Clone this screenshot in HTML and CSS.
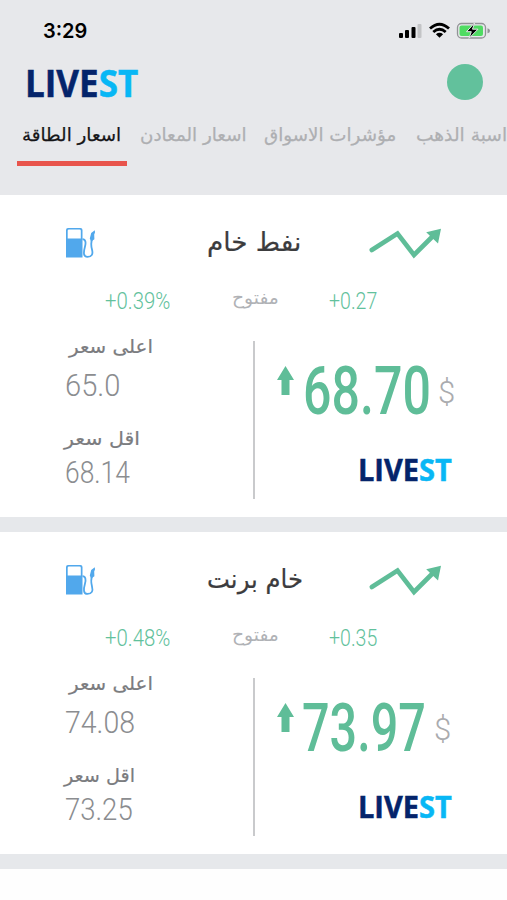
FILE: index.html
```html
<!DOCTYPE html>
<html lang="ar">
<head>
<meta charset="utf-8">
<meta name="viewport" content="width=device-width">
<title>LIVEST</title>
<link rel="stylesheet" href="styles.css">
</head>
<body>
<svg class="defs" width="0" height="0" aria-hidden="true">
  <symbol id="pump" viewBox="0 0 30 30">
    <path fill="#51a8ec" fill-rule="evenodd" d="M2 0H14.500Q16.500 0 16.500 2V29.500H0V2Q0 0 2 0ZM3 1.500Q1.700 1.500 1.700 2.800V10.600H14.800V2.800Q14.800 1.500 13.500 1.500Z"/>
    <path fill="none" stroke="#51a8ec" stroke-width="1.800" d="M16.500 11.200C19.800 11.200 20 15 19 18.500C17.500 24 17 28.900 21.500 28.900C26 28.900 27.200 26 26 21.500C25 17.500 24.500 14.500 26.300 10.800"/>
    <path fill="#51a8ec" d="M28.800 2.200L25.200 5L23.800 10.500L25 13.500L28.400 11.200L28.200 6.500L29 4.500Z"/>
  </symbol>
  <symbol id="trend" viewBox="0 0 74 32">
    <path fill="none" stroke="#5fbd98" stroke-width="4.600" stroke-linecap="round" stroke-linejoin="miter" d="M3.800 22L29.500 5.500L46 27L65 8"/>
    <path fill="#5fbd98" d="M73 .8L58.200 4.200L70 15.500Z"/>
  </symbol>
  <symbol id="up" viewBox="0 0 18 30">
    <path fill="#5fbd98" d="M8.500 0L17 14H12.500V29H4.500V14H0Z"/>
  </symbol>
</svg>

<header class="header">
  <div class="status">
    <span class="time">3:29</span>
    <svg class="status-icons" width="94" height="20" viewBox="0 0 94 20">
      <rect x="1" y="12" width="4" height="5" rx="1"/>
      <rect x="7" y="9" width="4" height="8" rx="1"/>
      <rect x="13.500" y="6" width="4" height="11" rx="1"/>
      <rect x="19.500" y="3" width="4" height="14" rx="1" fill="#c3c4c6"/>
      <g fill="none" stroke="#000" stroke-width="2.800">
        <path d="M32 7.500Q41.500 -1 51 7.500"/>
        <path d="M35.300 11Q41.500 5.500 47.700 11"/>
      </g>
      <path d="M37.900 13.200Q41.500 10.500 45.100 13.200L41.500 16.800Z"/>
      <rect x="59.500" y="2.500" width="28" height="14.500" rx="4" fill="none" stroke="#929396" stroke-width="1.300"/>
      <rect x="61.500" y="4.500" width="23.500" height="10.500" rx="2" fill="#4fdb62"/>
      <path fill="#929396" d="M89.500 7.200Q92 7.700 92 9.700T89.500 12.200Z"/>
      <path stroke="#e7e8eb" stroke-width="1" d="M76.500 2L68.500 10.700H73.300L71 17.300L80 8.200H74.500Z"/>
    </svg>
  </div>
  <div class="brand-row">
    <div class="logo logo-lg"><span class="fit">LIVE<b>ST</b></span></div>
    <div class="avatar"></div>
  </div>
  <nav class="tabs">
    <a class="tab tab1 active"><span class="fit">اسعار الطاقة</span></a>
    <a class="tab tab2"><span class="fit">اسعار المعادن</span></a>
    <a class="tab tab3"><span class="fit">مؤشرات الاسواق</span></a>
    <a class="tab tab4"><span class="fit">اسبة الذهب</span></a>
  </nav>
</header>

<main>
  <section class="card">
    <div class="card-head">
      <svg class="pump" width="30" height="30"><use href="#pump"/></svg>
      <h2 class="title"><span class="fit">نفط خام</span></h2>
      <svg class="trend" width="74" height="32"><use href="#trend"/></svg>
    </div>
    <div class="changes">
      <div class="pct"><span class="fit">+0.39%</span></div>
      <div class="state"><span class="fit">مفتوح</span></div>
      <div class="delta"><span class="fit">+0.27</span></div>
    </div>
    <div class="detail">
      <div class="range">
        <div class="label high"><span class="fit">اعلى سعر</span></div>
        <div class="value short"><span class="fit">65.0</span></div>
        <div class="label low"><span class="fit">اقل سعر</span></div>
        <div class="value narrow"><span class="fit">68.14</span></div>
      </div>
      <div class="quote">
        <div class="price-row">
          <svg width="18" height="30"><use href="#up"/></svg>
          <div class="price"><span class="fit">68.70</span></div>
          <div class="cur"><span class="fit">$</span></div>
        </div>
        <div class="logo logo-sm"><span class="fit">LIVE<b>ST</b></span></div>
      </div>
    </div>
  </section>

  <section class="card second">
    <div class="card-head">
      <svg class="pump" width="30" height="30"><use href="#pump"/></svg>
      <h2 class="title"><span class="fit">خام برنت</span></h2>
      <svg class="trend" width="74" height="32"><use href="#trend"/></svg>
    </div>
    <div class="changes">
      <div class="pct"><span class="fit">+0.48%</span></div>
      <div class="state"><span class="fit">مفتوح</span></div>
      <div class="delta"><span class="fit">+0.35</span></div>
    </div>
    <div class="detail">
      <div class="range">
        <div class="label high"><span class="fit">اعلى سعر</span></div>
        <div class="value"><span class="fit">74.08</span></div>
        <div class="label low"><span class="fit">اقل سعر</span></div>
        <div class="value"><span class="fit">73.25</span></div>
      </div>
      <div class="quote">
        <div class="price-row">
          <svg width="18" height="30"><use href="#up"/></svg>
          <div class="price"><span class="fit">73.97</span></div>
          <div class="cur"><span class="fit">$</span></div>
        </div>
        <div class="logo logo-sm"><span class="fit">LIVE<b>ST</b></span></div>
      </div>
    </div>
  </section>
</main>
</body>
</html>
```
FILE: styles.css
```css
* { box-sizing: border-box; }
body {
  margin: 0;
  width: 507px;
  height: 900px;
  overflow: hidden;
  background: #fefefe;
  font-family: Roboto, "DejaVu Sans", sans-serif;
}
.defs { display: block; }
.fit {
  display: inline-block;
  white-space: nowrap;
  transform-origin: 0 50%;
  transform: scaleX(var(--sx, 1));
}

.header { height: 195px; background: #e7e8eb; overflow: hidden; }
.status {
  display: flex;
  justify-content: space-between;
  align-items: center;
  height: 60px;
  padding: 1px 15px 0 43px;
}
.time { font: 600 20px/24px Inter, sans-serif; }
.brand-row {
  display: flex;
  justify-content: space-between;
  align-items: center;
  height: 44px;
  padding: 0 24px 0 25px;
}
.avatar { width: 36px; height: 36px; border-radius: 50%; background: #62c19c; }
.logo {
  color: #04246b;
  font-family: "Open Sans", sans-serif;
  font-weight: 700;
  -webkit-text-stroke: .5px currentColor;
}
.logo b { color: #08b7f5; font-weight: 700; }
.logo-lg { font-size: 37px; line-height: 44px; padding-top: 2px; --sx: .945; }
.logo-sm { font-size: 31px; line-height: 42px; --sx: .935; }

.tabs { display: flex; height: 62px; padding-left: 17px; }
.tab {
  flex: none;
  height: 62px;
  padding: 18px 0 0 5px;
  font: 18px/26px "DejaVu Sans", sans-serif;
  color: #aeafb2;
  -webkit-text-stroke: .25px currentColor;
  --sx: 1.015;
}
.tab2 { width: 124px; padding-left: 13px; }
.tab3 { width: 153px; padding-left: 13px; }
.tab4 { width: 102px; padding-left: 12px; --sx: 1.035; }
.tab.active { color: #151517; border-bottom: 5px solid #e8544c; width: 110px; }

.card {
  height: 337px;
  border-bottom: 15px solid #e6e8eb;
  background: #fff;
}
.card-head { display: flex; height: 86px; padding: 33px 65px 0 66px; }
.title {
  margin: -4px 0 0 111px;
  width: 97px;
  font: 26px/36px "DejaVu Sans", sans-serif;
  color: #3c3c3e;
  -webkit-text-stroke: .2px currentColor;
  --sx: 1.01;
}
.second .title { --sx: .935; }
.trend { margin-left: 64px; }
.changes { display: flex; height: 50px; padding-left: 105px; color: #62c19c; }
.pct, .delta { font: 300 23px/42px Roboto, sans-serif; }
.pct { width: 127px; --sx: .885; }
.delta { --sx: .85; }
.state { width: 97px; font: 18px/34px "DejaVu Serif", "DejaVu Sans", sans-serif; color: #b0b2b6; --sx: 1.04; }
.detail { display: flex; height: 186px; }
.range {
  width: 255px;
  height: 158px;
  margin-top: 10px;
  padding-left: 65px;
  border-right: 2px solid #c9cacc;
}
.label {
  height: 30px;
  margin-top: -10px;
  font: 19px/30px "DejaVu Sans", sans-serif;
  color: #7b7c7f;
  -webkit-text-stroke: .2px currentColor;
}
.high { padding-left: 4px; --sx: 1.045; }
.low { margin-top: 18px; margin-left: -1px; --sx: 1.08; }
.second .low { --sx: 1.01; }
.value { height: 40px; font: 300 32px/40px Roboto, sans-serif; color: #8b8d90; --sx: .89; margin-top: 4px; }
.value.short { --sx: .91; }
.value.narrow { --sx: .825; }
.low + .value { margin-top: -1px; }
.second .value { --sx: .89; }
.second .low + .value { --sx: .86; }
.quote { padding: 35px 0 0 22px; }
.price-row { display: flex; height: 82px; }
.price { width: 135px; margin: -14px 0 0 8px; font: 500 67px/79px Roboto, sans-serif; color: #5fbd98; --sx: .748; }
.second .price { width: 132px; margin-left: 7px; --sx: .725; }
.cur { margin-top: 7px; font: 300 31px/40px Roboto, sans-serif; color: #aaabae; }
.quote .logo-sm { padding-left: 81px; }
```
